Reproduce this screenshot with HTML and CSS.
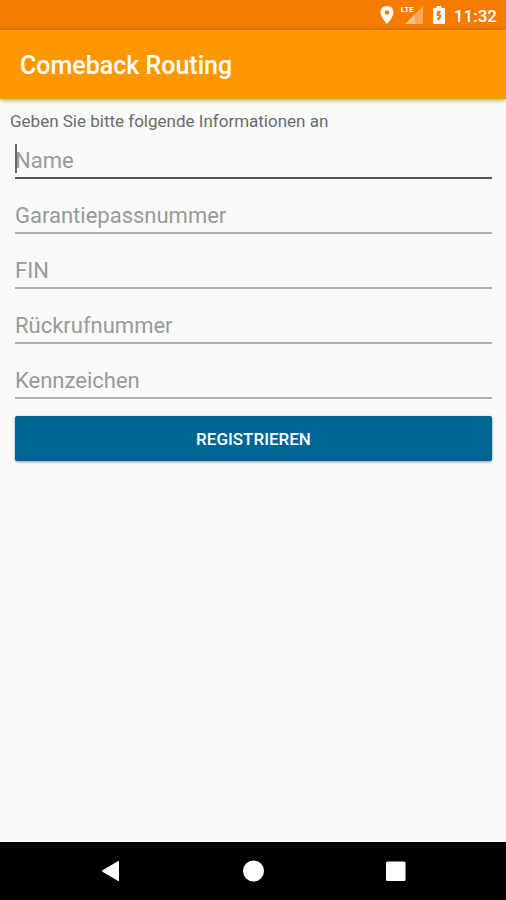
FILE: index.html
```html
<!DOCTYPE html>
<html lang="de">

<head>
  <meta charset="UTF-8">
  <meta name="viewport" content="width=device-width, initial-scale=1.0">
  <title>Comeback Routing</title>
  <link rel="stylesheet" href="styles.css">
</head>

<body>
  <div class="status-bar">
    <svg class="icon-location" width="14" height="18" viewBox="0 0 14 18">
      <path fill-rule="evenodd" d="M7 0C3.200 0 .5 2.800.5 6.500.5 11 7 18 7 18s6.500-7 6.500-11.500C13.500 2.800 10.800 0 7 0zM7 4.200a2.300 2.300 0 1 1 0 4.600 2.300 2.300 0 0 1 0-4.600z" />
    </svg>
    <div class="signal">
      <span class="signal-type">LTE</span>
      <svg width="18" height="18" viewBox="0 0 18 18">
        <path d="M18 0v18H0z" opacity=".35" />
        <path d="M10 8v10H0z" opacity=".25" />
      </svg>
    </div>
    <svg class="icon-battery" width="12" height="18" viewBox="0 0 12 18">
      <path fill-rule="evenodd" d="M3.500 0h5v2H11q1 0 1 1v14q0 1-1 1H1q-1 0-1-1V3q0-1 1-1h2.500zM8 5H4.200L3.500 10h2.300v1.500H3.500l2 3.500 3-4.500V9H6.300z" />
    </svg>
    <span class="clock">11:32</span>
  </div>

  <header class="app-bar">
    <h1>Comeback Routing</h1>
  </header>

  <main class="content">
    <p class="hint">Geben Sie bitte folgende Informationen an</p>
    <form class="form">
      <div class="field active">
        <input type="text" name="name" placeholder="Name" aria-label="Name">
      </div>
      <div class="field">
        <input type="text" name="garantiepassnummer" placeholder="Garantiepassnummer" aria-label="Garantiepassnummer">
      </div>
      <div class="field">
        <input type="text" name="fin" placeholder="FIN" aria-label="FIN">
      </div>
      <div class="field">
        <input type="tel" name="rueckrufnummer" placeholder="Rückrufnummer" aria-label="Rückrufnummer">
      </div>
      <div class="field">
        <input type="text" name="kennzeichen" placeholder="Kennzeichen" aria-label="Kennzeichen">
      </div>
      <button class="submit" type="submit">REGISTRIEREN</button>
    </form>
  </main>

  <nav class="nav-bar">
    <button type="button" aria-label="Zurück">
      <svg width="22" height="22" viewBox="0 0 22 22">
        <path d="M19 1.500v19q0 .8-.8.400L2.500 11.800q-1-.8 0-1.600L18.200 1q.8-.3.800.5z" />
      </svg>
    </button>
    <button type="button" aria-label="Startseite">
      <svg width="22" height="22" viewBox="0 0 22 22">
        <circle cx="11.500" cy="11" r="10.500" />
      </svg>
    </button>
    <button type="button" aria-label="Übersicht">
      <svg width="22" height="22" viewBox="0 0 22 22">
        <rect x="2" y="1.500" width="19.500" height="19.500" rx="1.500" />
      </svg>
    </button>
  </nav>
</body>

</html>
```
FILE: styles.css
```css
* {
  margin: 0;
  padding: 0;
  box-sizing: border-box;
}

body {
  display: flex;
  flex-direction: column;
  min-height: 100vh;
  background-color: #fafafa;
  font-family: Roboto, sans-serif;
}

svg {
  display: block;
  fill: #fff;
}

.status-bar {
  display: flex;
  justify-content: flex-end;
  align-items: center;
  height: 30px;
  padding-right: 9px;
  background-color: #f57c00;
  color: #fff;
}

.signal {
  position: relative;
  margin: 0 10px 0 11px;
}

.signal-type {
  position: absolute;
  left: -4px;
  top: 0;
  font-size: 8px;
  font-weight: 700;
  line-height: 8px;
}

.clock {
  margin-left: 9px;
  padding-top: 2px;
  font-size: 17px;
  font-weight: 500;
  line-height: 26px;
}

.app-bar {
  display: flex;
  align-items: center;
  height: 69px;
  padding: 2px 20px 0;
  background-color: #ff9800;
  box-shadow: 0 1px 5px rgba(0, 0, 0, 0.4);
}

.app-bar h1 {
  color: #fff;
  font-size: 25px;
  font-weight: 500;
  line-height: 32px;
}

.content {
  flex: 1;
  padding: 10px;
}

.hint {
  color: #6b6b6b;
  font-size: 17px;
  line-height: 24px;
}

.form {
  display: flex;
  flex-direction: column;
  gap: 15px;
  padding: 6px 4px 0 5px;
}

.field {
  position: relative;
}

.field input {
  display: block;
  width: 100%;
  height: 40px;
  padding-top: 5px;
  border: none;
  border-bottom: 2px solid #b0b0b0;
  background: none;
  outline: none;
  color: #212121;
  font-family: inherit;
  font-size: 22px;
}

.field input::placeholder {
  color: #999;
  opacity: 1;
}

.field.active input {
  border-bottom-color: #555;
}

/* text cursor */
.field.active::before {
  content: "";
  position: absolute;
  left: 0;
  top: 5px;
  width: 2px;
  height: 29px;
  background-color: #666;
}

.submit {
  height: 45px;
  margin-top: 2px;
  border: none;
  border-radius: 2px;
  background-color: #006495;
  box-shadow: 0 1px 3px rgba(0, 0, 0, 0.4);
  color: #fff;
  font-family: inherit;
  font-size: 17px;
  font-weight: 500;
}

.nav-bar {
  display: flex;
  justify-content: center;
  height: 58px;
  background-color: #000;
}

.nav-bar button {
  display: flex;
  justify-content: center;
  align-items: center;
  width: 28%;
  border: none;
  background: none;
}
```
